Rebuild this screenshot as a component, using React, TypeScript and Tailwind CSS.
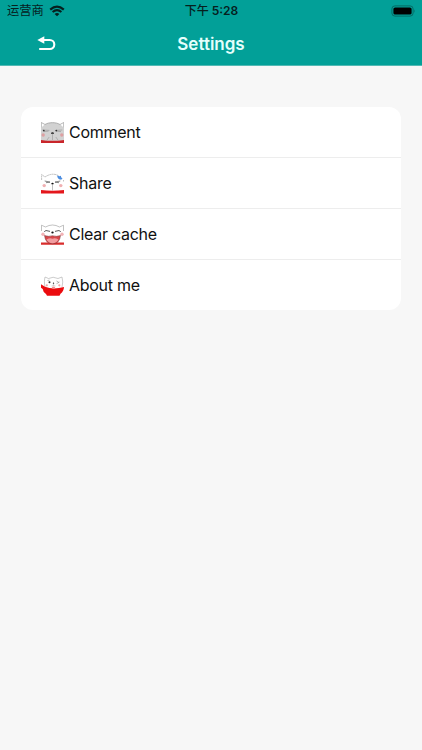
import type { ReactNode } from 'react'

type SettingsItem = {
  label: string
  icon: ReactNode
}

function CommentCat() {
  return (
    <svg viewBox="0 0 23 23" className="size-[23px] overflow-hidden" fill="none" aria-hidden="true">
      <path d="M0 20V6C1 4.800 2.500 3.500 4 2.500C8 0 15 0 19 2.500C20.500 3.500 22 4.800 23 6V20Z" fill="#d2d2d2" />
      <path d="M.3 5.500V.5L4 2.500M22.700 5.500V.5L19 2.500M4 2.500C8 0 15 0 19 2.500" stroke="#888" strokeWidth=".6" />
      <path d="M1.500 8L8.500 8.400M14.300 8.400L21.300 8M3 9.600L7.500 9.200M15.500 9.200L20 9.600" stroke="#888" strokeWidth=".5" />
      <circle cx="2.800" cy="8.600" r=".9" fill="#333" />
      <circle cx="15.300" cy="8.600" r=".9" fill="#333" />
      <ellipse cx="11.500" cy="11.200" rx="1.400" ry=".9" fill="#222" />
      <path d="M11.500 11.500V18M8.200 15L5.700 18.500M14.800 15L17.300 18.500" stroke="#999" strokeWidth=".6" />
      <circle cx="2.200" cy="13" r="1.700" fill="#dda0a2" />
      <circle cx="20.800" cy="13" r="1.700" fill="#dda0a2" />
      <path d="M0 18Q11.500 19.700 23 18V21H0Z" fill="#c9252a" />
    </svg>
  )
}

function ShareCat() {
  return (
    <svg viewBox="0 0 23 23" className="size-[23px] overflow-hidden" fill="none" aria-hidden="true">
      <path d="M.6 7V1.500L4 4M4 4Q11.500-1 18 3M22.500 8.500V7" stroke="#999" strokeWidth=".6" strokeDasharray="2 .4" />
      <path d="M16 2.500L18.300 3.300L20 2.700V4.300L21.500 5.200L20.200 6.700L18 6.200L16.800 5Z" fill="#4d8ee0" />
      <path d="M3.700 8L9 9.100L5 9.700M19.300 8L14 9.100L18 9.700" stroke="#555" strokeWidth=".7" />
      <ellipse cx="11.500" cy="10.600" rx="1.200" ry=".9" fill="#111" />
      <path d="M11.500 11V17.500" stroke="#999" strokeWidth=".6" />
      <circle cx="3.200" cy="12.600" r="1.700" fill="#f0b0b2" />
      <circle cx="19.800" cy="12.600" r="1.700" fill="#f0b0b2" />
      <path d="M0 17Q11.500 18.500 23 17V20.600H0Z" fill="#e4171c" />
    </svg>
  )
}

function LaughingCat() {
  return (
    <svg viewBox="0 0 23 23" className="size-[23px] overflow-hidden" fill="none" aria-hidden="true">
      <path d="M.5 7V1.200L4.500 3M22.500 7V1.200L18.500 3M4.500 3Q11.500-1 18.500 3" stroke="#999" strokeWidth=".6" />
      <path d="M3.200 7.700L5 6.500L9 7.400M14 7.400L18 6.500L19.800 7.700" stroke="#333" strokeWidth=".8" />
      <ellipse cx="11.500" cy="8.500" rx="1.200" ry=".9" fill="#111" />
      <circle cx="2" cy="10.300" r="1.700" fill="#f2b2b6" />
      <circle cx="21" cy="10.300" r="1.700" fill="#f2b2b6" />
      <path d="M0 18.600H23V20.700H0Z" fill="#d92d2d" />
      <path d="M3.500 11.500Q7.500 13 11.500 11.700Q15.500 13 19.500 11.500Q18.700 19.800 11.500 19.800Q4.300 19.800 3.500 11.500Z" fill="#d6464a" stroke="#75383a" strokeWidth=".5" />
      <path d="M5.600 15.500Q9 13.500 11.500 14.700Q14 13.500 17.400 15.500Q15.500 19.300 11.500 19.300Q7.500 19.300 5.600 15.500Z" fill="#f29da0" />
    </svg>
  )
}

function BowlCat() {
  return (
    <svg viewBox="0 0 23 23" className="size-[23px] overflow-hidden" fill="none" aria-hidden="true">
      <path d="M4 12C3 8 3.500 4.500 4 2L7.500 3.500Q12 1 17 3.500L21 2Q22.500 7 21 12" stroke="#aaa" strokeWidth=".6" />
      <path d="M6.500 5.500L8.500 5.100M15.500 6L18 7.500M15.500 8.700L18.500 7" stroke="#888" strokeWidth=".6" />
      <circle cx="8.500" cy="7.300" r="1" fill="#333" />
      <circle cx="12.500" cy="8.300" r=".7" fill="#222" />
      <path d="M12.500 8.500V10.500L10.500 11M12.500 10.500L14.500 11" stroke="#aaa" strokeWidth=".5" />
      <circle cx="5.800" cy="10.300" r="1.100" fill="#f2a7a7" />
      <circle cx="18.300" cy="10.300" r="1.100" fill="#f2a7a7" />
      <path d="M0 9.300L4 11.700Q12 15 23 12Q22.800 16.300 19.500 18.800L18.500 20.700H6L5 19Q2 17.200 1.700 14L0 12.700Z" fill="#eb0c0f" />
      <path d="M10.800 12Q12.500 10.800 14.200 12L13.500 13.700H11.500Z" fill="#ee9090" />
    </svg>
  )
}

const items: SettingsItem[] = [
  { label: 'Comment', icon: <CommentCat /> },
  { label: 'Share', icon: <ShareCat /> },
  { label: 'Clear cache', icon: <LaughingCat /> },
  { label: 'About me', icon: <BowlCat /> },
]

function StatusBar() {
  return (
    <div className="grid h-[22px] grid-cols-3 items-center pl-[7px] pr-[6px] text-[12px] leading-[22px] text-[#06201e]">
      <div className="flex items-center gap-[5px]">
        <span className="text-[12.300px]">运营商</span>
        <svg viewBox="0 0 16 12" className="h-[12px] w-[16px]" fill="none" aria-label="Wi-Fi">
          <path d="M1.200 4.600Q8-1.300 14.800 4.600" stroke="#06201e" strokeWidth="2.200" />
          <path d="M3.600 7.100Q8 3.200 12.400 7.100" stroke="#06201e" strokeWidth="2" />
          <path d="M5.600 8.900Q8 7 10.400 8.900L8 11.300Z" fill="#06201e" />
        </svg>
      </div>
      <div className="whitespace-nowrap text-center font-semibold">
        <span className="font-medium">下午</span> <span>5:28</span>
      </div>
      <svg viewBox="0 0 25 12" className="h-[12px] w-[25px] justify-self-end" fill="none" aria-label="Battery">
        <rect x=".9" y=".9" width="21.200" height="10.200" rx="3" stroke="#056b65" />
        <rect x="2.400" y="2.400" width="18.200" height="7.200" rx="1.700" fill="#000" />
        <path d="M23.300 4.200Q24.700 6 23.300 7.800Z" fill="#056b65" />
      </svg>
    </div>
  )
}

export default function App() {
  return (
    <div className="min-h-[750px] w-full bg-[#f7f7f7] font-['Inter','Noto_Sans_CJK_SC',sans-serif]">
      <header className="h-[66px] border-b border-[#52b9b4] bg-[#02a098]">
        <StatusBar />
        <div className="grid h-[43px] grid-cols-[80px_1fr_80px] items-center">
          <button type="button" aria-label="Back" className="ml-[36px] w-5">
            <svg viewBox="0 0 20 18" className="h-[18px] w-5" fill="none">
              <path d="M7 5H13.800A4.300 4.300 0 0 1 13.800 14H4" stroke="#fff" strokeWidth="2.100" strokeLinecap="round" />
              <path d="M1.300 5L8.300 1.200V8.800Z" fill="#fff" />
            </svg>
          </button>
          <h1 className="text-center text-[17px] font-semibold leading-[22px] text-[#e4fffc]">Settings</h1>
        </div>
      </header>

      <main className="px-[21px] pt-[41px]">
        <ul className="h-[203px] overflow-hidden rounded-[12px] bg-white">
          {items.map(item => (
            <li
              key={item.label}
              className="flex h-[51px] items-center gap-[5px] border-b border-[#ededed] pl-5 text-[16px] tracking-[-0.27px] text-[#111] last:h-[50px] last:border-b-0"
            >
              <span className="mt-[2px]">{item.icon}</span>
              <span>{item.label}</span>
            </li>
          ))}
        </ul>
      </main>
    </div>
  )
}
